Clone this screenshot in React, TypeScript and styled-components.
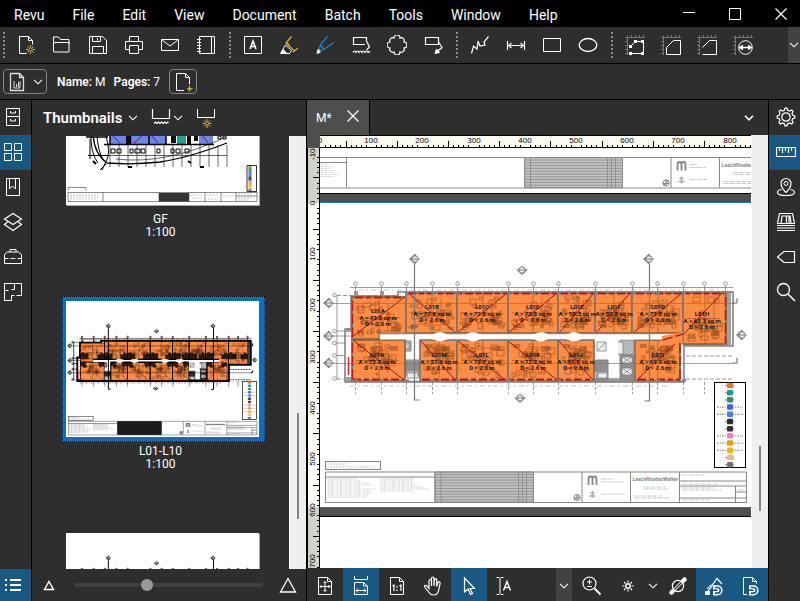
import React, { useLayoutEffect, useRef, useState } from "react";
import styled, { createGlobalStyle, css } from "styled-components";

const Global = createGlobalStyle`
  * { box-sizing: border-box; }
  html, body, #root { height: 100%; margin: 0; }
  body { background: #000; color: #fff; font-family: Roboto, "Liberation Sans", sans-serif; font-size: 12px; overflow: hidden; }
  button { font: inherit; color: inherit; background: none; border: 0; padding: 0; margin: 0; cursor: pointer; }
`;

/* ---------- shell ---------- */

const Shell = styled.div`
  display: flex;
  flex-direction: column;
  height: 100vh;
`;
const MenuBar = styled.nav`
  display: flex;
  align-items: center;
  flex: none;
  height: 27px;
  background: #000;
`;
const MenuItem = styled.button`
  padding: 3px 14px 0;
  font-size: 14px;
  line-height: 20px;
`;
const WindowButtons = styled.div`
  display: flex;
  gap: 8px;
  margin-left: auto;
`;
const WindowButton = styled.button`
  display: grid;
  place-items: center;
  width: 38px;
  height: 24px;
`;
const ToolRow = styled.div`
  display: flex;
  align-items: center;
  flex: none;
  height: 37px;
  background: #2e2e2e;
  border-bottom: 1px solid #000;
  overflow: hidden;
`;
const Grip = styled.span<{ $first?: boolean }>`
  flex: none;
  width: ${(p) => (p.$first ? 8 : 11)}px;
  height: 26px;
  display: flex;
  justify-content: center;
  &::before {
    content: "";
    width: 2px;
    height: 26px;
    background: repeating-linear-gradient(#8c8c8c 0 2px, transparent 2px 4px);
  }
`;
const ToolButton = styled.button<{ $active?: boolean; $width?: number }>`
  display: grid;
  place-items: center;
  flex: none;
  align-self: stretch;
  width: ${(p) => p.$width ?? 36}px;
  background: ${(p) => (p.$active ? "#185882" : "transparent")};
`;
const DropButton = styled.button<{ $end?: boolean }>`
  display: grid;
  place-items: center;
  flex: none;
  align-self: stretch;
  width: ${(p) => (p.$end ? 12 : 16)}px;
  margin-left: auto;
  background: #424242;
  overflow: hidden;
`;
const PropertyRow = styled.div`
  display: flex;
  align-items: center;
  flex: none;
  height: 36px;
  padding-left: 3px;
  background: #2e2e2e;
  border-bottom: 1px solid #000;
  line-height: 16px;
`;
const Outlined = styled.button`
  display: flex;
  align-items: center;
  justify-content: center;
  gap: 6px;
  height: 25px;
  padding: 0 3px;
  border: 1px solid #858585;
  border-radius: 4px;
`;
const Property = styled.span`
  margin-left: 10px;
  b { font-weight: 600; }
  & + & { margin-left: 8px; margin-right: 9px; }
`;
const Workspace = styled.div`
  display: flex;
  flex: 1;
  min-height: 0;
`;

/* ---------- side rails ---------- */

const Rail = styled.div<{ $right?: boolean }>`
  display: flex;
  flex-direction: column;
  flex: none;
  width: 32px;
  background: #2e2e2e;
  ${(p) => (p.$right ? "border-left: 1px solid #000;" : "border-right: 1px solid #000;")}
`;
const RailButton = styled.button<{ $active?: boolean; $last?: boolean; $right?: boolean }>`
  display: flex;
  align-items: center;
  height: ${(p) => (p.$last ? 32 : 35)}px;
  padding-bottom: ${(p) => (p.$last ? 0 : 1)}px;
  padding-left: ${(p) => (p.$right ? 7 : 3)}px;
  background: ${(p) => (p.$active ? "#185882" : "transparent")};
  ${(p) => p.$last && "margin-top: auto;"}
`;

/* ---------- thumbnails panel ---------- */

const Panel = styled.section`
  display: flex;
  flex-direction: column;
  flex: none;
  width: 275px;
  background: #2e2e2e;
  border-right: 1px solid #000;
`;
const PanelHeader = styled.header`
  display: flex;
  align-items: center;
  flex: none;
  height: 36px;
  padding-left: 11px;
`;
const PanelTitle = styled.h2`
  margin: 0 6px 0 0;
  font-size: 15px;
  line-height: 20px;
  font-weight: 600;
`;
const HeaderButton = styled.button<{ $gap?: number }>`
  display: grid;
  place-items: center;
  margin-right: ${(p) => p.$gap ?? 0}px;
`;
const PanelBody = styled.div`
  display: flex;
  flex: 1;
  min-height: 0;
`;
const ThumbList = styled.div`
  flex: 1;
  overflow: hidden;
`;
const ThumbStrip = styled.div`
  display: flex;
  flex-direction: column;
  align-items: center;
  gap: 57px;
  margin-top: -72px;
`;
const ThumbItem = styled.button`
  display: flex;
  flex-direction: column;
  align-items: center;
  line-height: 13px;
`;
const ThumbFrame = styled.span<{ $selected?: boolean }>`
  display: block;
  margin: 0 0 3px 6px;
  padding: 4px 5px 4px 3px;
  border: 1px solid transparent;
  svg { display: block; background: #fff; box-shadow: 1px 1px 0 #a8a8a8; }
  ${(p) => p.$selected && css`
    background: #0c70b6;
    border: 1px dotted #000;
    svg { box-shadow: none; }
  `}
`;
const ThumbName = styled.span``;
const ScrollTrack = styled.div`
  display: flex;
  flex-direction: column;
  align-items: center;
  flex: none;
  width: 17px;
  background: #efefef;
  border-left: 1px solid #fff;
`;
const ScrollThumb = styled.span<{ $size: number }>`
  flex: ${(p) => p.$size} 0 0;
  width: 2px;
  background: #858585;
`;
const ScrollSpace = styled.span<{ $grow: number }>`
  flex: ${(p) => p.$grow} 0 0;
`;
const PanelFooter = styled.footer`
  display: flex;
  align-items: center;
  gap: 15px;
  flex: none;
  height: 32px;
  padding: 0 8px 0 7px;
`;
const SizeSlider = styled.input`
  appearance: none;
  flex: 1;
  min-width: 0;
  height: 14px;
  margin: 0;
  background: transparent;
  &::-webkit-slider-runnable-track { height: 4px; border-radius: 2px; background: #404040; }
  &::-webkit-slider-thumb { appearance: none; width: 12px; height: 12px; margin-top: -4px; border-radius: 50%; background: #989898; }
`;

/* ---------- document area ---------- */

const DocArea = styled.main`
  display: flex;
  flex-direction: column;
  flex: 1;
  min-width: 0;
  background: #2e2e2e;
`;
const TabRow = styled.div`
  display: flex;
  flex: none;
  height: 35px;
`;
const Tab = styled.div`
  display: flex;
  align-items: center;
  gap: 11px;
  width: 63px;
  padding: 0 0 0 9px;
  background: #4e4e4e;
  border-right: 1px solid #000;
`;
const TabMenu = styled.button`
  display: grid;
  place-items: center;
  width: 38px;
  margin-left: auto;
`;
const Canvas = styled.div`
  display: grid;
  grid-template-columns: 13px minmax(0, 1fr) 17px;
  grid-template-rows: 13px minmax(0, 1fr);
  flex: 1;
  min-height: 0;
`;
const Corner = styled.div`
  background: #4e4e4e;
`;
const TopRuler = styled.div`
  border-top: 1px solid #000;
  border-bottom: 1px solid #000;
  background: #fbfbf0;
  overflow: hidden;
  svg { display: block; }
`;
const SideRuler = styled.div`
  border-left: 1px solid #000;
  border-right: 1px solid #000;
  background: #d2d2c8;
  overflow: hidden;
  svg { display: block; }
`;
const DocScroll = styled(ScrollTrack)`
  grid-column: 3;
  grid-row: 1 / 3;
`;
const Sheets = styled.div`
  display: flex;
  flex-direction: column;
  overflow: hidden;
  background: #fff;
  svg { display: block; flex: none; }
`;
const SheetGap = styled.div<{ $below?: boolean }>`
  flex: none;
  height: 10px;
  background: #4e4e4e;
  border-top: 1px solid ${(p) => (p.$below ? "#1478be" : "#000")};
  border-bottom: 1px solid ${(p) => (p.$below ? "#000" : "#1478be")};
`;
const ViewBar = styled.div`
  display: flex;
  flex: none;
  height: 33px;
  svg { margin-top: 2px; }
`;
const ViewDrop = styled(DropButton)`
  margin-right: 2px;
`;

/* ---------- icons ---------- */

const rulerAxes = <path stroke="#8660c0" d="M2.500 .5v19.500M0 2.500h20M6.500 0v2M10.500 0v2M14.500 0v2M18.500 0v2M0 6.500h2M0 10.500h2M0 14.500h2M0 18.500h2" />;
const magnet = (
  <>
    <path strokeWidth="4.600" d="M9 11.500h4.500a2.800 2.800 0 0 1 0 5.600h-4.500" />
    <path stroke="#185882" strokeWidth="1.600" d="M11 11.500h2.500a2.800 2.800 0 0 1 0 5.600h-2.500M7 14.300h6" />
  </>
);

const glyphs: Record<string, React.ReactNode> = {
  newFile: <><path d="M10.500 18.500h-7v-17h9l4 4v4" /><path d="M12.500 1.500v4h4" /><g stroke="#e0b820"><circle cx="14.500" cy="14.500" r="1.700" /><path d="M14.500 10v2M14.500 17v2M10 14.500h2M17 14.500h2M11.500 11.500l1.400 1.400M16 16l1.500 1.500M17.500 11.500l-1.500 1.500M11.500 17.500l1.500-1.500" /></g></>,
  folder: <path d="M1.500 16.500v-14.500h5l2 2.500h8.500v12.500h-14.500q-1 0-1-1M1.500 9q0-1.500 1.500-1.500h13q1.500 0 1.500 1.500" />,
  save: <path d="M1.500 1.500h13l4 4v13h-17zM4.500 1.500v5h8v-5M9.500 3v2.500M4.500 18.500v-7h11v7" />,
  print: <path d="M5.500 6.500v-5h9v5M5.500 14.500h-4v-8h17v8h-4M5.500 10.500h9v8h-9z" />,
  mail: <><path d="M1.500 4.500h17v11h-17z" /><path d="M2 5l8 6 8-6" /></>,
  notebook: <path d="M3.500 1.500h15v17h-15zM15.500 1.500v17M1 4.500h4M1 7.500h4M1 10.500h4M1 13.500h4M1 16.500h4" />,
  textBox: <><path d="M1.500 1.500h17v17h-17z" /><path d="M7 14l3-8 3 8M8 11.500h4" strokeWidth="1.600" /></>,
  highlighter: <><g stroke="#d8b020" strokeWidth="1.200"><path d="M12.500 1.500L7 8l9 8.500M14 17l5-4M10.500 10.500l-3-3" /></g><path d="M6.500 10l-5 8.500h9l2-3z" /><path d="M4 14.500l4 4h-6z" fill="#fff" /></>,
  pen: <><g stroke="#1686d2" strokeWidth="1.300"><path d="M12.500 1.500L6 9l-2.500 6.500L9 14.500l9.500-7M5.500 10l4 4.500" /></g><path d="M2 18.500l1-4 2.500 2.500z" fill="#fff" /></>,
  textWave: <><path d="M15.500 6v-3.500h-13v7h11.500M15.500 6l3 6-3 3" strokeWidth="1.200" /><path strokeWidth="1.200" d="M2 17.500q1.500-3 3 0q1.500-3 3 0q1.500-3 3 0q1.500-3 3 0q1.500-3 3 0q1-2 2 0" /></>,
  cloud: <path strokeWidth="1.200" d="M7 3a3 3 0 0 1 6 0a3 3 0 0 1 4 4a3 3 0 0 1 0 6a3 3 0 0 1-4 4a3 3 0 0 1-6 0a3 3 0 0 1-4-4a3 3 0 0 1 0-6a3 3 0 0 1 4-4z" />,
  callout: <><path strokeWidth="1.200" d="M2.500 2.500h13v7h-13zM15.500 7l3.500 5.500-5 4" /><path d="M12 18.500l1.500-4.500 3 3.500z" fill="#fff" /></>,
  polyline: <path strokeWidth="1.200" d="M1.500 18.500l2-7.500 3.500 3 1-8 2 5 5-1-1-3 4.500-5.500" />,
  dimension: <path strokeWidth="1.200" d="M1.500 6v9M18.500 6v9M2 10.500h16M5.500 8l-3 2.500 3 2.500M14.500 8l3 2.500-3 2.500" />,
  rectangle: <path d="M1.500 3.500h17v13h-17z" />,
  ellipse: <ellipse cx="10" cy="10" rx="8.800" ry="6.500" strokeWidth="1.300" />,
  rulerNodes: <>{rulerAxes}<path d="M5.500 11.500l5-5h8v12h-12" /><path fill="#fff" stroke="none" d="M4 10h3v3h-3zM9 5h3v3h-3zM16 5h3v3h-3zM16 17h3v3h-3zM4 17h3v3h-3z" /></>,
  rulerShape: <>{rulerAxes}<path d="M5.500 19.500v-7l7-7h7v14z" /></>,
  rulerOpen: <>{rulerAxes}<path d="M5.500 12.500l7-7h7v14h-14" /></>,
  rulerCircle: <>{rulerAxes}<circle cx="12.500" cy="12.500" r="6.800" /><path strokeWidth="1.500" d="M6 12.500h13" /><path fill="#fff" stroke="none" d="M6 12.500l4-3v6zM19 12.500l-4-3v6z" /></>,
  cabinet: <path d="M3.500 1.500h13v17h-13zM3.500 9.500h13M7.500 4v2h5v-2M7.500 12v2h5v-2" />,
  grid: <path d="M1.500 1.500h7v7h-7zM11.500 1.500h7v7h-7zM1.500 11.500h7v7h-7zM11.500 11.500h7v7h-7z" />,
  bookmark: <path d="M3.500 1.500h13v17h-13zM6.500 1.500v10.500l3-3 3 3v-10.500" />,
  layers: <path strokeWidth="1.200" d="M10 1.500l8.500 5.500-8.500 5.500-8.500-5.500zM4.500 10l-3 2.500 8.500 6 8.500-6-3-2.500" />,
  toolbox: <path d="M1.500 16.500v-9l3-2.500h11l3 2.500v9zM7 5v-2.500h6v2.500M1.500 11.500h4M7.500 11.500h5M14.500 11.500h4" />,
  rooms: <path d="M8.500 18.500h-7v-17h17v12h-5M8.500 18.500v-5h3M11.500 1.500v6h-3M1.500 8.500h4" />,
  list: <path strokeWidth="2" d="M2 5h2M2 10h2M2 15h2M7 5h11M7 10h11M7 15h11" />,
  gear: <><path strokeWidth="1.200" d="M8.300 3.200l.7-2h2l.7 2 1.900.8 2-1 1.400 1.400-1 2 .8 1.900 2 .7v2l-2 .7-.8 1.900 1 2-1.400 1.400-2-1-1.900.8-.7 2h-2l-.7-2-1.900-.8-2 1L3 15.600l1-2-.8-1.900-2-.7V9l2-.7.8-1.900-1-2L4.400 3l2 1z" /><circle cx="10" cy="10" r="4.200" strokeWidth="1.200" /></>,
  measure: <path d="M.5 5.500h19v9h-19zM3.500 5v4M6.500 5v6M9.500 5v4M12.500 5v6M15.500 5v4" strokeWidth="1.200" />,
  pin: <><path strokeWidth="1.200" d="M10 15.500q-5-5-5-9a5 5 0 0 1 10 0q0 4-5 9z" /><circle cx="10" cy="6.500" r="2" /><path strokeWidth="1.200" d="M5.500 12.500q-4 .7-4 2.700 0 3.300 8.500 3.300t8.500-3.300q0-2-4-2.700" /></>,
  stack: <path d="M3.500 1.500h13l2 10h-17zM6 4h8l1 7.500h-10zM10.500 4v7M13 4v7M1 13.500h18M1 16h18M1 18.500h18" strokeWidth="1.200" />,
  tag: <path strokeWidth="1.200" d="M8 4.500h10.500v11H8l-6.500-5.500z" />,
  search: <><circle cx="7.500" cy="7.500" r="6" strokeWidth="1.300" /><path strokeWidth="1.500" d="M12 12l7 7" /></>,
  fitPage: <><path d="M3.500 1.500h9l4 4v13h-13zM12.500 1.500v4h4" /><path d="M10 5.500v10M5 10.500h10M8.500 7l1.500-1.500 1.500 1.500M8.500 14l1.500 1.500 1.500-1.500M6.500 9l-1.500 1.500 1.500 1.500M13.500 9l1.500 1.500-1.500 1.500" /></>,
  fitWidth: <path d="M3.500 0v3.500h13v-3.500M3.500 19v-12.500h9l4 3.500v9M12.500 6.500v3.500h4M3.500 18.500h13M5 14.500h10M7 12.500l-2 2 2 2M13 12.500l2 2-2 2" />,
  actual: <><path d="M3.500 1.500h9l4 4v13h-13zM12.500 1.500v4h4" /><path strokeWidth="1.200" d="M5.500 10l1.500-1v6M12.500 10l1.500-1v6M10 10v1.500M10 13.500v1.500" /></>,
  hand: <path strokeWidth="1.200" d="M6 12.500V5q0-1.500 1.200-1.500T8.500 5v5V2.500q0-1.500 1.200-1.500T11 2.500V10l.4-6q0-1.300 1.200-1.300T13.700 4v6.500l1.100-4q.5-1.200 1.500-.8t.8 1.600L15.700 14q-.8 5-5.200 5-3 0-4.500-2.500L1.700 11q-.6-1.200.4-1.500T4 10z" />,
  pointer: <path strokeWidth="1.200" d="M5.500 2v14l3.500-3 2.500 5.500 2-1-2.500-5h4.500z" />,
  textSelect: <><path d="M1.500 1.500h2.500l1 1 1-1h2.500M5 2.500v15M1.500 18.500h2.500l1-1 1 1h2.500" /><path strokeWidth="1.400" d="M8.500 14.500l3.500-9 3.500 9M9.500 11.500h5" /></>,
  zoomIn: <><circle cx="7.500" cy="7.500" r="6.500" strokeWidth="1.200" /><path d="M7.500 3.500v5M5 6h5M5 10.500h5" /><path strokeWidth="1.800" d="M12.500 12.500l6 6" /></>,
  sun: <><circle cx="10" cy="10" r="2.200" strokeWidth="1.400" /><path strokeWidth="1.200" d="M10 4.500v2M10 13.500v2M4.500 10h2M13.500 10h2M6 6l1.500 1.500M12.500 12.500l1.500 1.500M14 6l-1.500 1.500M7.500 12.500L6 14" /></>,
  disable: <><circle cx="10" cy="10" r="5.600" strokeWidth="1.200" /><path strokeWidth="4.500" strokeLinecap="round" d="M3.500 16.500l1-1M15.500 4.500l1-1" /><path strokeWidth="3" d="M4 16L16 4" /><path stroke="#2e2e2e" strokeWidth="1.200" d="M6.500 13.500l7-7" /></>,
  snapShape: <><path d="M4 15l9-12.500 5 5.500M9 8.500l-5 7" strokeWidth="1.200" /><path d="M3 13l4-4.500" /><path fill="#fff" d="M1.500 15.500h4v3h-4z" />{magnet}</>,
  snapPage: <><path d="M7 18.500h-3.500v-17h9l4 4v2M12.500 1.500v4h4" />{magnet}</>,
  pageStats: <><path d="M3.500 1.500h9l4 4v13h-13zM12.500 1.500v4h4" stroke="#ddd" strokeWidth="1.300" /><path d="M7 9v7h6v-7M9.500 12v3M11.500 10v5" stroke="#ddd" /></>,
  addPage: <><path d="M11 18.500h-7.500v-17h9l4 4v7M12.500 1.500v4h4" /><path stroke="#e8c020" strokeWidth="1.300" d="M16.500 14v5.500M14 16.800h5.500" /></>,
  trayWave: <path d="M1.500 1v9.500h17V1M3 15.500l1.500-1.500 1.500 1.500 1.500-1.500 1.500 1.500 1.500-1.500 1.500 1.500 1.500-1.500 1.500 1.500 1.500-1.500 1 1" strokeWidth="1.200" />,
  traySun: <><path d="M1.500 1v8.500h17V1" /><g stroke="#e0b820"><circle cx="11" cy="15.500" r="1.600" /><path d="M11 11v2.500M11 17.500v2.500M6.500 15.500h2.500M13 15.500h2.500M8 12.500l1.500 1.500M14 12.500l-1.500 1.500M8 18.500l1.500-1.500M14 18.500l-1.500-1.500" /></g></>,
  smallTriangle: <path strokeWidth="1.400" d="M10 6.500l4.500 8h-9z" />,
  triangle: <path strokeWidth="1.300" d="M10 3.500l7.500 13.500h-15z" />,
  minimize: <path d="M4 8.500h12" />,
  maximize: <path d="M4.500 4.500h11v11h-11z" />,
  close: <path strokeWidth="1.200" d="M4.500 4.500l11 11M15.500 4.500l-11 11" />,
};

const Icon = ({ name }: { name: string }) => (
  <svg width="20" height="20" viewBox="0 0 20 20" fill="none" stroke="#fff" strokeWidth="1" aria-hidden="true">
    {glyphs[name]}
  </svg>
);
const Chevron = ({ strong }: { strong?: boolean }) => (
  <svg width="10" height="6" viewBox="0 0 10 6" fill="none" stroke="#fff" strokeWidth={strong ? 1.6 : 1.1} aria-hidden="true">
    <path d="M1 .8L5 4.800l4-4" />
  </svg>
);

/* ---------- floor plan ---------- */

type Unit = { id: string; area: string; x: number; y: number; w: number; h: number; tx: number; ty: number; line: string; top?: boolean };

const units: Unit[] = [
  { id: "L01A", area: "73.8", x: 352, y: 297, w: 54, h: 42, tx: 378, ty: 313, line: "M352 337L406 296", top: true },
  { id: "L01B", area: "72.8", x: 406, y: 293, w: 51, h: 40, tx: 432, ty: 309, line: "M408 293L456 333", top: true },
  { id: "L01C", area: "72.8", x: 457, y: 293, w: 51, h: 40, tx: 482, ty: 309, line: "M457 333L507 293", top: true },
  { id: "L01D", area: "72.8", x: 508, y: 293, w: 50, h: 40, tx: 533, ty: 309, line: "M508 333L557 293", top: true },
  { id: "L01E", area: "50.3", x: 558, y: 293, w: 37, h: 40, tx: 577, ty: 309, line: "M559 333L594 293", top: true },
  { id: "L01F", area: "52.8", x: 595, y: 293, w: 37, h: 40, tx: 614, ty: 309, line: "M596 333L630 293", top: true },
  { id: "L01G", area: "72.8", x: 632, y: 293, w: 51, h: 40, tx: 658, ty: 309, line: "M633 333L682 293", top: true },
  { id: "L01H", area: "68.3", x: 683, y: 293, w: 43, h: 51, tx: 702, ty: 316, line: "M663 339L684 334L722 293", top: true },
  { id: "L01N", area: "73.8", x: 352, y: 340, w: 53, h: 41, tx: 377, ty: 357, line: "M354 341L404 380" },
  { id: "L01M", area: "51.6", x: 420, y: 340, w: 37, h: 41, tx: 439, ty: 357, line: "M421 341L455 380" },
  { id: "L01L", area: "72.7", x: 457, y: 340, w: 51, h: 41, tx: 482, ty: 357, line: "M458 341L505 380" },
  { id: "L01K", area: "73.3", x: 508, y: 340, w: 50, h: 41, tx: 533, ty: 357, line: "M508 341L557 380" },
  { id: "L01J", area: "51.5", x: 558, y: 340, w: 36, h: 41, tx: 576, ty: 357, line: "M559 341L593 380" },
  { id: "L01I", area: "69.9", x: 635, y: 340, w: 45, h: 41, tx: 658, ty: 357, line: "M637 380L678 341" },
];
const gridLines = [355, 381, 406, 432, 457, 508, 533, 558, 595, 632, 657, 683, 704, 725];
const legend = ["#f07818", "#10a090", "#309060", "#4060e0", "#4878f8", "#303030", "#3c3236", "#f080c0", "#e0a010", "#f0b800", "#f0b888", "#707078"];

const noise = (n: number) => {
  const v = Math.sin(n * 12.9898) * 43758.5453;
  return v - Math.floor(v);
};

const furniture = (u: Unit, seed: number) => {
  let d = "";
  for (let i = 0; i < 28; i++) {
    const deep = i % 2 === 0;
    const w = 2 + Math.round(noise(seed + i) * 6);
    const h = 2 + Math.round(noise(seed + i + 40) * 5);
    const x = u.x + 3 + Math.round(noise(seed + i + 80) * (u.w - w - 6));
    const offset = Math.round(noise(seed + i + 120) * (deep ? u.h * 0.35 : u.h - h - 6));
    const y = u.top ? u.y + u.h - 3 - h - offset : u.y + 3 + offset;
    d += `M${x} ${y}h${w}v${h}h${-w}z`;
  }
  const mid = u.x + Math.round(u.w / 2);
  d += `M${mid} ${u.y}v${u.h}M${mid + 9} ${u.y + 6}v${u.h - 14}M${u.x + 4} ${u.y + u.h / 2}h${u.w - 10}`;
  return d;
};

const marks = (x: number, y: number, w: number, rows: number, gap = 2) =>
  Array.from({ length: rows }, (_, i) => `M${x} ${y + i * gap}h${Math.round(w * (0.6 + noise(x + i) * 0.4))}`).join("");

const TitleBlock = ({ ink, notesEnd, gridStart, start, x, y, small }: { ink: string; notesEnd: number; gridStart: number; start: number; x: number; y: number; small?: boolean }) => (
  <g fill="none" stroke={ink}>
    <path d={`M${start} ${y}H${x + 213}V${y + 30.5}H${start}zM${notesEnd} ${y}v30`} />
    <path strokeWidth="1" strokeDasharray="2 1 3 1 1 1" opacity=".4" d={marks(start + 2, y + 7, (notesEnd - start) / 2 - 6, 10) + marks((start + notesEnd) / 2, y + 7, (notesEnd - start) / 2 - 5, 7)} />
    <rect x={gridStart} y={y} width={x - gridStart} height="30" fill={ink} fillOpacity=".5" />
    <path strokeWidth=".8" d={Array.from({ length: 10 }, (_, i) => `M${gridStart} ${y + 2.5 + i * 2.8}H${x}`).join("") + `M${gridStart + 6} ${y}v30M${x - 15} ${y}v30M${x - 11} ${y}v30M${x - 7} ${y}v30`} />
    <path d={`M${x + 48.5} ${y}v30M${x + 97} ${y}v30M${x + 146} ${y}v30M${x + 146} ${y + 9}h67M${x + 146} ${y + 14}h67M${x + 146} ${y + 26}h67M${x + 202} ${y + 14}v16M${x + 202} ${y + 20}h11`} />
    <circle cx={x + 43.5} cy={y + 25.5} r="3" />
    <path d={`M${x + 41} ${y + 28}l5-5M${x + 43.5} ${y + 22}v7M${x + 40} ${y + 26}h7`} />
    <path strokeWidth="1.800" d={`M${x + 55} ${y + 13}v-6q0-2.500 2-2.500t2 2.500v6M${x + 59} ${y + 7}q0-2.500 2-2.500t2 2.500v6`} />
    <path d={`M${x + 56} ${y + 24}h6M${x + 59} ${y + 19}v7M${x + 57} ${y + 21}h4`} strokeWidth="1.500" opacity=".7" />
    <path strokeWidth=".8" strokeDasharray="1 1 3 1" opacity=".7" d={marks(x + 67, y + 7, 14, 1) + marks(x + 67, y + 10, 26, 1) + marks(x + 67, y + 22, 28, 1) + marks(x + 110, y + 15, 26, 2) + marks(x + 100, y + 24, 42, 2) + marks(x + 148, y + 3, 34, 1) + marks(x + 148, y + 12, 60, 1) + marks(x + 148, y + 16, 52, 2) + marks(x + 148, y + 28, 44, 1) + marks(x + 204, y + 18, 8, 1)} />
    {small ? (
      <path strokeWidth="3" opacity=".6" d={`M${x + 99} ${y + 7}h43`} />
    ) : (
      <text x={x + 99} y={y + 9} fill={ink} stroke="none" fontSize="5" fontWeight="700" fontFamily="Roboto, sans-serif">LeachRhodesWalker</text>
    )}
  </g>
);

const Section = ({ x, y, dir, ink }: { x: number; y: number; dir: "l" | "d"; ink: string }) => (
  <g>
    <path fill={ink} d={dir === "l" ? `M${x - 6} ${y}l6-5.500l2 3v5l-2 3z` : `M${x} ${y + 5}l-6-5.500h12z`} />
    <circle cx={x} cy={y} r="3.200" fill="#e8e8e8" stroke={ink} />
    <path stroke={ink} d={`M${x - 3} ${y}h8`} />
  </g>
);

const Plan = ({ thumb }: { thumb?: boolean }) => {
  const ink = thumb ? "#000" : "#828282";
  const weight = thumb ? 2.5 : 1;
  return (
    <svg width={thumb ? 193 : 431} height={thumb ? 136 : 304} viewBox="320 203 431 304" role="img" aria-label="Typical floor plan, L01 to L10">
      <g fill="none" stroke={ink} strokeWidth={thumb ? 1.6 : 0.8}>
        <path d="M350 287.500H733M337 295V380M337 331h14M337 343h14M337 355.500h14" />
        <path strokeDasharray="4 2" d="M337 379h14M337 295.500h68M680 356h54M680 379h54" />
        <path strokeDasharray="3 2" d={gridLines.map((x) => `M${x}.500 382v12`).join("")} />
        <path d={gridLines.map((x) => `M${x}.500 286v7`).join("")} />
        {gridLines.map((x) => <circle key={x} cx={x + 0.5} cy="283.500" r="1.800" fill="#fff" />)}
        {[295, 331, 343, 355.5, 378.5].map((y) => <circle key={y} cx="334.500" cy={y} r="1.800" fill="#fff" />)}
        <path strokeDasharray="5 3 2 3" opacity=".6" d="M358 290h365M350 386h320" />
      </g>
      <path fill="#fff" stroke={ink} strokeWidth={weight * 1.6} d="M351 296h47v-4h335v54h-49v36h-339v-53h6z" />
      <path fill="#b8b8b8" stroke={ink} d="M400 341h11v10h-11zM406 360h13v16h-13zM596 360h12v20h-12zM620 340h14v40h-14z" />
      <path fill={ink} fillOpacity=".75" d="M405 361h15v10h-15zM594 360h14v12h-14zM620 354h15v27h-15zM594 378h86v4h-86zM683 344h48v2h-48zM346 328h6v4h-6zM346 377h6v5h-6zM726 293h5v52h-5z" />
      <path fill="#eee" stroke={ink} strokeWidth=".8" d="M407 373h11v5h-11zM598 373h9v5h-9zM622 357h10v6h-10zM622 368h10v7h-10zM622 357l10 6M632 357l-10 6M622 368l10 7M632 368l-10 7M597 342h9v9h-9zM597 351l9-9M618 342h5v12h-5M402 343h7v6h-7zM402 343l7 6M409 343l-7 6" />
      {units.map((u, i) => (
        <g key={u.id}>
          <rect x={u.x} y={u.y} width={u.w} height={u.h} fill="#ff8e44" stroke={thumb ? "#000" : "#84603f"} strokeWidth={thumb ? 1.5 : 1.6} />
          <path fill="none" stroke={thumb ? "#000" : "#9c5020"} strokeWidth={thumb ? 1.2 : 0.8} strokeOpacity={thumb ? 0.35 : 0.8} d={furniture(u, i * 17 + 3)} />
          {!thumb && <path fill="#8e4a1c" fillOpacity=".5" d={u.top ? `M${u.x + u.w - 15} ${u.y + u.h - 13}h8v5h-8zM${u.x + 5} ${u.y + u.h - 9}h7v4h-7z` : `M${u.x + u.w - 15} ${u.y + 6}h8v5h-8zM${u.x + 5} ${u.y + 4}h7v4h-7z`} />}
          <path fill="none" stroke="#9c1414" strokeWidth="1" d={u.line} />
        </g>
      ))}
      <path fill="#fff" d="M380 334H683v5.500H380zM434 334q6-4 12 0v5.500q-6 4-12 0zM467 334q6-4 12 0v5.500q-6 4-12 0zM535 334q6-4 12 0v5.500q-6 4-12 0zM568 334q6-4 12 0v5.500q-6 4-12 0z" />
      <path fill="#ff8e44" d="M662 336l21-4v12h-21z" />
      <g fill="none" stroke={thumb ? "#000" : "#858585"} strokeWidth={thumb ? 3 : 1.5}>
        <path d="M380 333.500h52M448 333.500h17M481 333.500h52M549 333.500h17M582 333.500h80M420 340h12M448 340h17M481 340h52M549 340h17M582 340h12M352 381.500H682M406 292H732" />
        <path d={units.map((u) => `M${u.x} ${u.y}v${u.h}`).join("")} strokeWidth={thumb ? 2 : 1} />
      </g>
      <path fill="none" stroke="#b81818" strokeWidth={thumb ? 1 : 1.8} strokeDasharray="8 3 5 3" d="M355 297.500h49M408 293.500h316M353 379.500h50M422 379.500h170M638 379.500h42" />
      <path fill="none" stroke="#b81818" strokeWidth="1.500" strokeDasharray="10 3" d="M352.500 301v36M352.500 343v36M725.500 297v46M680 343v36M663 340l20-6" />
      <path stroke="#e82020" strokeWidth="1.500" d="M348.500 357v18" />
      <path fill={ink} d={gridLines.map((x) => `M${x - 1} 291h4v4h-4zM${x - 1} 379h4v3h-4z`).slice(0, 12).join("")} opacity=".8" />
      {thumb && units.map((u) => (
        <path key={u.id} fill="#000" fillOpacity=".8" d={u.top ? `M${u.x} 320l6-3 5 4 7-1v13h-18zM${u.x + u.w} 322l-7-5-4 6-5-1v11h16z` : `M${u.x} 340h12v6l4 3-8 4-4-4h-4zM${u.x + u.w} 340h-13v6l4 6 5-3h4z`} />
      ))}
      <g fill="none" stroke={thumb ? "#000" : "#797979"} strokeWidth={thumb ? 2.2 : 1.2}>
        <path d="M414.500 264v136h5M649.500 264v137h-5" />
        <path strokeWidth={thumb ? 1 : 0.7} d="M332 303.500h403M332 336h20M332 363.500h403" />
        <path d="M733 303h4v-5M733 363h4v-5" />
      </g>
      <Section x={415} y={259} dir="l" ink={ink} />
      <Section x={649} y={259} dir="l" ink={ink} />
      <Section x={522} y={270} dir="d" ink={ink} />
      <Section x={520} y={398} dir="d" ink={ink} />
      <Section x={329} y={303} dir="l" ink={ink} />
      <Section x={329} y={336} dir="l" ink={ink} />
      <Section x={329} y={363} dir="l" ink={ink} />
      <Section x={742} y={335} dir="l" ink={ink} />
      {!thumb && (
        <g fill="#141414" fontSize="6" fontWeight="700" fontFamily="Roboto, sans-serif" textAnchor="middle">
          {units.map((u) => (
            <text key={u.id} x={u.tx} y={u.ty}>
              {u.id}
              <tspan x={u.tx} dy="7">A = {u.area} sq m</tspan>
              <tspan x={u.tx} dy="6">D = 2.6 m</tspan>
            </text>
          ))}
        </g>
      )}
      <rect x="714.500" y="382.500" width="31" height="85" fill="#fff" stroke="#000" strokeWidth={thumb ? 1.5 : 1} />
      {legend.map((c, i) => (
        <g key={i}>
          <path stroke="#555" strokeWidth={thumb ? 1 : 0.7} strokeDasharray="2 1 1 1" d={`M${[3, 4, 7, 8, 9].includes(i) ? 717 : 725} ${385.5 + i * 7.2}h${[3, 4, 7, 8, 9].includes(i) ? 26 : 10}`} />
          <rect x="727" y={382.7 + i * 7.2} width="6" height="5.500" rx="1" fill={c} />
        </g>
      ))}
      <rect x="325.500" y="461.500" width="55" height="8" fill="none" stroke={ink} />
      <path d="M327 464h20M327 467h48" stroke={ink} strokeWidth=".8" strokeDasharray="2 1" opacity=".6" />
      <path d="M325 477h110" stroke={ink} />
      <TitleBlock ink={thumb ? "#333" : "#888"} start={325.5} notesEnd={435} gridStart={435} x={533.5} y={472} small={thumb} />
      {thumb && <path fill="#1c1c1c" d="M435 472h98v30h-98z" />}
    </svg>
  );
};

const GroundFloor = () => (
  <svg width="193" height="136" viewBox="0 0 193 136" role="img" aria-label="Ground floor plan">
    <path fill="#6c86f0" d="M44 56h56v19h-56zM133 56h14v19h-14z" />
    <path fill="#20a090" d="M111 56h9v19h-9z" />
    <path fill="#111" d="M60 66h5v9h-5zM105 66h5v8h-5zM121 66h4v9h-4zM128 66h4v6h-4z" />
    <path stroke="#701838" fill="none" d="M46 66l8 8M68 74l9-8M85 66l7 8M136 66l6 8" />
    <g fill="none" stroke="#000">
      <path strokeWidth="1.500" d="M38 75.500h110M44 56v20M64.500 56v20M83 56v20M100 56v20M20 68h22" />
      <path strokeWidth="1.300" d="M27 62q0 22 14 32 26 2 53-1 28-4 67-19" />
      <path d="M25 62q-1 22 7 32M31 62q0 20 7 30M38 62q6 14 4 26l-6 13M40 95l-6 6M22 86.500h20M24 70v20" />
      <path strokeWidth=".6" d={Array.from({ length: 14 }, (_, i) => `M${44 + i * 9} 76v22`).join("") + "M24 86.500h137M50 90q50 6 110-22"} />
      <path d="M45 80h4v4h-4zM51 80h4v4h-4zM64 80h3v4h-3zM69 80h5v4h-5zM75 80h4v4h-4zM91 80h3v4h-3zM105 80h3v4h-3zM110 80h4v4h-4zM119 80h4v4h-4zM152 67h3v3h-3zM157 67h3v3h-3z" />
      <path d="M62 98h4M134 98h4M27 92l3 3M122 92l3 2" strokeWidth="2" />
    </g>
    <path fill="#fff" stroke="#000" strokeWidth=".8" d="M181 96.500h9.500v26h-9.500z" />
    {legend.map((c, i) => <rect key={i} x="182.500" y={97 + i * 2.1} width="3" height="2" fill={c} />)}
    <g fill="none" stroke="#555" strokeWidth=".7">
      <path d="M2 121.500v-3h18v3M2 123.500h189v9h-189zM37 123.500v9M93 123.500v9M123 123.500v9M139 123.500v9M155 123.500v9M170 123.500v9M170 127h21" />
      <path opacity=".5" strokeDasharray="2 1" d="M4 126h28M4 128h30M4 130h26M125 126h10M126 129h10M141 126h10M142 130h10M157 127h10M172 129h16M172 131h12M172 125h14" />
    </g>
    <path fill="#333" d="M93 124h30v8.500h-30z" />
  </svg>
);

/* ---------- rulers ---------- */

const SCALE = 51.2;

const useSize = () => {
  const ref = useRef<HTMLDivElement>(null);
  const [size, setSize] = useState({ width: 431, height: 420 });
  useLayoutEffect(() => {
    const el = ref.current;
    if (!el) return;
    const measure = () => setSize({ width: el.clientWidth, height: el.clientHeight });
    measure();
    const observer = new ResizeObserver(measure);
    observer.observe(el);
    return () => observer.disconnect();
  }, []);
  return [ref, size] as const;
};

const HorizontalRuler = () => {
  const [ref, { width }] = useSize();
  let d = "";
  for (let i = 0; (i * SCALE) / 10 < width; i++) {
    const x = Math.round((i * SCALE) / 10) + 0.5;
    d += `M${x} 11v${i % 10 === 5 ? -6 : i % 10 === 0 ? 0 : -2}`;
  }
  const labels = Array.from({ length: Math.floor((width - 8) / SCALE) + 1 }, (_, i) => i);
  return (
    <TopRuler ref={ref}>
      <svg width={width} height="11" aria-hidden="true">
        <path d={d} stroke="#000" />
        <g fontSize="8" fontFamily="Liberation Sans, sans-serif" textAnchor="middle">
          {labels.map((i) => <text key={i} x={Math.round(i * SCALE)} y="7">{i * 100}</text>)}
        </g>
      </svg>
    </TopRuler>
  );
};

const VerticalRuler = () => {
  const [ref, { height }] = useSize();
  const zero = 55;
  let d = "";
  for (let i = -10; zero + (i * SCALE) / 10 < height; i++) {
    const y = Math.round(zero + (i * SCALE) / 10) + 0.5;
    d += `M11 ${y}h${Math.abs(i % 10) === 5 ? -6 : i % 10 === 0 ? 0 : -2}`;
  }
  const labels = Array.from({ length: Math.floor((height - zero) / SCALE) + 2 }, (_, i) => i - 1);
  return (
    <SideRuler ref={ref}>
      <svg width="11" height={height} aria-hidden="true">
        <path fill="#fbfbf0" d="M0 55h11v304h-11z" />
        <path d={d} stroke="#000" />
        <g fontSize="8" fontFamily="Liberation Sans, sans-serif" textAnchor="middle">
          {labels.map((i) => {
            const y = Math.round(zero + i * SCALE);
            return <text key={i} transform={`rotate(-90 7 ${y})`} x="7" y={y}>{i * 100}</text>;
          })}
        </g>
      </svg>
    </SideRuler>
  );
};

/* ---------- data ---------- */

const menus = ["Revu", "File", "Edit", "View", "Document", "Batch", "Tools", "Window", "Help"];
const toolGroups = [
  ["newFile", "folder", "save", "print", "mail", "notebook"],
  ["textBox", "highlighter", "pen", "textWave", "cloud", "callout"],
  ["polyline", "dimension", "rectangle", "ellipse"],
  ["rulerNodes", "rulerShape", "rulerOpen", "rulerCircle"],
];
const leftRail = ["cabinet", "grid", "bookmark", "layers", "toolbox", "rooms"];
const rightRail = ["gear", "measure", "pin", "stack", "tag", "search"];
const viewTools = ["fitPage", "fitWidth", "actual", "hand", "pointer", "textSelect"];

export default function App() {
  return (
    <Shell>
      <Global />
      <MenuBar>
        {menus.map((m) => <MenuItem key={m}>{m}</MenuItem>)}
        <WindowButtons>
          {["minimize", "maximize", "close"].map((n) => (
            <WindowButton key={n} aria-label={n}><Icon name={n} /></WindowButton>
          ))}
        </WindowButtons>
      </MenuBar>

      <ToolRow>
        {toolGroups.map((group, i) => (
          <React.Fragment key={i}>
            <Grip $first={i === 0} />
            {group.map((n) => <ToolButton key={n} aria-label={n}><Icon name={n} /></ToolButton>)}
          </React.Fragment>
        ))}
        <DropButton $end aria-label="More tools"><Chevron /></DropButton>
      </ToolRow>

      <PropertyRow>
        <Outlined aria-label="Document properties"><Icon name="pageStats" /><Chevron /></Outlined>
        <Property><b>Name:</b> M</Property>
        <Property><b>Pages:</b> 7</Property>
        <Outlined aria-label="Add page"><Icon name="addPage" /></Outlined>
      </PropertyRow>

      <Workspace>
        <Rail>
          {leftRail.map((n) => (
            <RailButton key={n} $active={n === "grid"} aria-label={n}><Icon name={n} /></RailButton>
          ))}
          <RailButton $active $last aria-label="Markups list"><Icon name="list" /></RailButton>
        </Rail>

        <Panel>
          <PanelHeader>
            <PanelTitle>Thumbnails</PanelTitle>
            <HeaderButton $gap={13} aria-label="Panel menu"><Chevron /></HeaderButton>
            <HeaderButton $gap={2} aria-label="Page setup"><Icon name="trayWave" /></HeaderButton>
            <HeaderButton $gap={13} aria-label="Page setup menu"><Chevron /></HeaderButton>
            <HeaderButton aria-label="New page"><Icon name="traySun" /></HeaderButton>
          </PanelHeader>
          <PanelBody>
            <ThumbList>
              <ThumbStrip>
                <ThumbItem>
                  <ThumbFrame><GroundFloor /></ThumbFrame>
                  <ThumbName>GF</ThumbName>
                  <ThumbName>1:100</ThumbName>
                </ThumbItem>
                <ThumbItem>
                  <ThumbFrame $selected><Plan thumb /></ThumbFrame>
                  <ThumbName>L01-L10</ThumbName>
                  <ThumbName>1:100</ThumbName>
                </ThumbItem>
                <ThumbItem aria-label="Next page">
                  <ThumbFrame><Plan thumb /></ThumbFrame>
                </ThumbItem>
              </ThumbStrip>
            </ThumbList>
            <ScrollTrack>
              <ScrollSpace $grow={277} />
              <ScrollThumb $size={106} />
              <ScrollSpace $grow={50} />
            </ScrollTrack>
          </PanelBody>
          <PanelFooter>
            <Icon name="smallTriangle" />
            <SizeSlider type="range" min={0} max={100} defaultValue={38} aria-label="Thumbnail size" />
            <Icon name="triangle" />
          </PanelFooter>
        </Panel>

        <DocArea>
          <TabRow>
            <Tab>
              M*
              <button aria-label="Close tab"><Icon name="close" /></button>
            </Tab>
            <TabMenu aria-label="Tab list"><Chevron strong /></TabMenu>
          </TabRow>
          <Canvas>
            <Corner />
            <HorizontalRuler />
            <VerticalRuler />
            <Sheets>
              <svg width="431" height="45" viewBox="320 148 431 45" aria-hidden="true">
                <TitleBlock ink="#888" start={260} notesEnd={346.5} gridStart={524.5} x={622.5} y={157.5} />
                <path stroke="#888" d="M320 162.500h26" />
              </svg>
              <SheetGap />
              <Plan />
              <SheetGap $below />
            </Sheets>
            <DocScroll>
              <ScrollSpace $grow={311} />
              <ScrollThumb $size={65} />
              <ScrollSpace $grow={57} />
            </DocScroll>
          </Canvas>
          <ViewBar>
            {viewTools.map((n) => (
              <ToolButton key={n} $active={n === "fitWidth" || n === "pointer"} aria-label={n}><Icon name={n} /></ToolButton>
            ))}
            <ViewDrop aria-label="Select mode"><Chevron /></ViewDrop>
            <ToolButton aria-label="Zoom"><Icon name="zoomIn" /></ToolButton>
            <ToolButton aria-label="Dimmer"><Icon name="sun" /></ToolButton>
            <ToolButton $width={14} aria-label="Dimmer menu"><Chevron /></ToolButton>
            <ToolButton aria-label="Disable line weights"><Icon name="disable" /></ToolButton>
            <ToolButton $active aria-label="Snap to markup"><Icon name="snapShape" /></ToolButton>
            <ToolButton $active aria-label="Snap to content"><Icon name="snapPage" /></ToolButton>
          </ViewBar>
        </DocArea>

        <Rail $right>
          {rightRail.map((n) => (
            <RailButton key={n} $right $active={n === "measure"} aria-label={n}><Icon name={n} /></RailButton>
          ))}
        </Rail>
      </Workspace>
    </Shell>
  );
}
